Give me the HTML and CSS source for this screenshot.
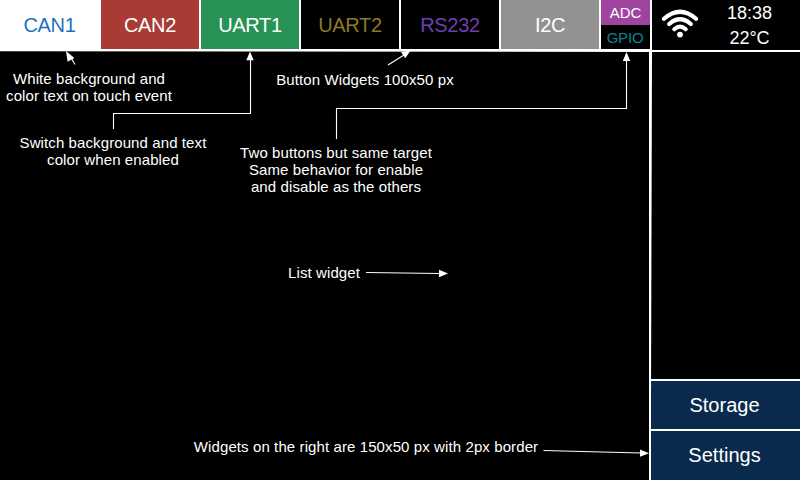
FILE: index.html
```
<!DOCTYPE html>
<html lang="en">
<head>
<meta charset="utf-8">
<title>Bus monitor</title>
<link rel="stylesheet" href="styles.css">
</head>
<body>
<div class="screen">
  <header class="topbar">
    <nav class="tabs">
      <div class="tab can1"><span>CAN1</span></div>
      <div class="tab can2"><span>CAN2</span></div>
      <div class="tab uart1"><span>UART1</span></div>
      <div class="tab uart2"><span>UART2</span></div>
      <div class="tab rs232"><span>RS232</span></div>
      <div class="tab i2c"><span>I2C</span></div>
      <div class="split">
        <div class="half adc">ADC</div>
        <div class="half gpio">GPIO</div>
      </div>
    </nav>
    <div class="status">
      <svg class="wifi" width="38" height="31" viewBox="0 0 38 31">
        <g fill="none" stroke="#fff" stroke-width="4.2" stroke-linecap="round">
          <path d="M3 10.8Q19 -3.4 35 10.8"/>
          <path d="M8.2 16Q19 6.4 29.8 16"/>
          <path d="M13.3 21.2Q19 16 24.7 21.2"/>
        </g>
        <circle cx="19" cy="26.6" r="2.9" fill="#fff"/>
      </svg>
      <div class="readout"><span>18:38</span><span>22°C</span></div>
    </div>
  </header>
  <div class="body">
    <main class="list"></main>
    <aside class="side">
      <div class="action">Storage</div>
      <div class="action">Settings</div>
    </aside>
  </div>
  <svg class="arrows" width="800" height="480" viewBox="0 0 800 480">
    <g fill="none" stroke="#fff" stroke-width="2">
      <path d="M0 50.3L650 51"/>
      <path d="M651 52L650 400"/>
    </g>
    <g fill="none" stroke="#fff" stroke-width="1.1">
      <path d="M75 64.5L70 56"/>
      <path d="M113.5 129V113.5H250.5V58"/>
      <path d="M388 65L404 55"/>
      <path d="M336.5 139V108.5H626.5V58"/>
      <path d="M366 272.5L440 273.5"/>
      <path d="M543.5 450.5L641 453"/>
    </g>
    <g fill="#fff">
      <path d="M66 51L74.3 58L67.6 61.8Z"/>
      <path d="M250 51.5L253.7 60.3H246.3Z"/>
      <path d="M410.5 50.5L405.3 58.2L401 52Z"/>
      <path d="M626.5 52L630.2 61H622.8Z"/>
      <path d="M448 273.5L439 277.2V269.8Z"/>
      <path d="M649 453.3L640 456.8V449.4Z"/>
    </g>
  </svg>
  <p class="note touch">White background and<br>color text on touch event</p>
  <p class="note enabled">Switch background and text<br>color when enabled</p>
  <p class="note buttons">Button Widgets 100x50 px</p>
  <p class="note pair">Two buttons but same target<br>Same behavior for enable<br>and disable as the others</p>
  <p class="note listing">List widget</p>
  <p class="note right">Widgets on the right are 150x50 px with 2px border</p>
</div>
</body>
</html>
```
FILE: styles.css
```
* { box-sizing: border-box; }
body { margin: 0; background: #000; color: #fff; font-family: "Liberation Sans", Arial, sans-serif; }
.screen { position: relative; width: 800px; height: 480px; overflow: hidden; display: flex; flex-direction: column; }
.topbar { display: flex; height: 52px; }
.tabs { display: flex; width: 650px; height: 51px; border-bottom: 2px solid #fff; }
.tab { width: 100px; display: flex; align-items: center; justify-content: center; padding-top: 2px; font-size: 20px; letter-spacing: -0.3px; border-right: 2px solid #fff; }
.can1 { width: 101px; background: #fff; color: #1f70c1; }
.can2 { background: #a93a34; }
.uart1 { background: #289355; }
.uart2 { color: #8c7a24; }
.rs232 { color: #6f3fb0; }
.i2c { background: #929292; }
.split { width: 49px; display: flex; flex-direction: column; }
.half { height: 25px; display: flex; align-items: center; justify-content: center; font-size: 15px; }
.adc { background: #a044a0; padding-top: 1px; }
.gpio { color: #128290; padding: 1px 1px 0 0; letter-spacing: -0.2px; }
.status { width: 150px; height: 52px; display: flex; border-left: 2px solid #fff; border-bottom: 2px solid #fff; }
.wifi { margin: 8px 0 0 9px; }
.readout { flex: 1; display: flex; flex-direction: column; align-items: center; padding-top: 1px; line-height: 25px; font-size: 18px; }
.body { flex: 1; display: flex; }
.list { width: 649px; }
.side { width: 151px; display: flex; flex-direction: column; justify-content: flex-end; border-left: 2px solid #fff; }
.action { height: 50px; background: #0a2a4d; border-top: 2px solid #fff; display: flex; align-items: center; justify-content: center; font-size: 20px; padding-right: 2px; }
.action:last-child { height: 51px; }
.arrows { position: absolute; left: 0; top: 0; }
.note { position: absolute; margin: 0; font-size: 15px; letter-spacing: 0.1px; line-height: 17px; text-align: center; white-space: nowrap; transform: translateX(-50%); }
.touch { left: 89px; top: 70px; }
.enabled { left: 113px; top: 134px; }
.buttons { left: 365px; top: 71px; }
.pair { left: 336px; top: 144px; }
.listing { left: 324px; top: 264px; }
.right { left: 366px; top: 438px; }
```
